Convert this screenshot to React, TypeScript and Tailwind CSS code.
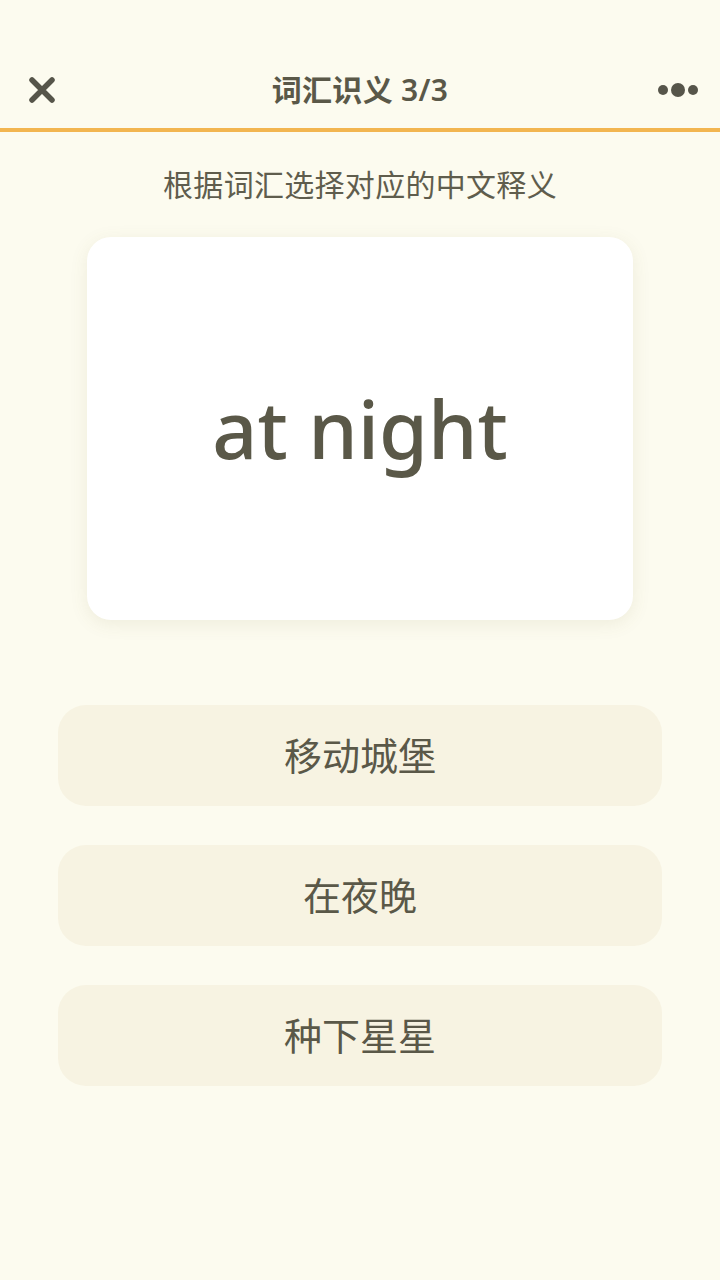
import React from 'react'

const options = ['移动城堡', '在夜晚', '种下星星']

export default function App() {
  return (
    <div
      className="min-h-[1280px] w-full bg-[#fcfbef] text-[#5a5848]"
      style={{ fontFamily: '"Noto Sans", "Noto Sans CJK SC", sans-serif' }}
    >
      <header className="pt-[52px]">
        <div className="relative flex h-[76px] items-center justify-center">
          <button className="absolute left-[26px] top-1/2 -translate-y-1/2 p-0.5">
            <svg width="28" height="28" viewBox="0 0 28 28" fill="none">
              <path d="M4 4L24 24M24 4L4 24" stroke="#56554a" strokeWidth="5.5" strokeLinecap="round" />
            </svg>
          </button>
          <h1 className="text-[30px] font-semibold leading-none tracking-[0.3px]">词汇识义 3/3</h1>
          <div className="absolute right-[22px] top-1/2 flex -translate-y-1/2 items-center gap-[3px]">
            <span className="h-[10px] w-[10px] rounded-full bg-[#56554a]" />
            <span className="h-[14px] w-[14px] rounded-full bg-[#56554a]" />
            <span className="h-[10px] w-[10px] rounded-full bg-[#56554a]" />
          </div>
        </div>
      </header>
      <div className="h-[4px] bg-[#f2b550]" />

      <p className="mt-[33px] text-center text-[30px] leading-[40px] tracking-[0.3px] text-[#5f5d4d]">根据词汇选择对应的中文释义</p>

      <div className="mx-auto mt-[32px] flex h-[383px] w-[546px] items-center justify-center rounded-[24px] bg-white shadow-[0_4px_18px_rgba(120,110,60,0.10)]">
        <span className="text-[79px] font-medium leading-none">at night</span>
      </div>

      <div className="mx-auto mt-[85px] flex w-[604px] flex-col gap-[39px]">
        {options.map((o) => (
          <button
            key={o}
            className="flex h-[101px] items-center justify-center rounded-[28px] bg-[#f7f3e2] text-[38px] text-[#5a5848]"
          >
            {o}
          </button>
        ))}
      </div>
    </div>
  )
}
